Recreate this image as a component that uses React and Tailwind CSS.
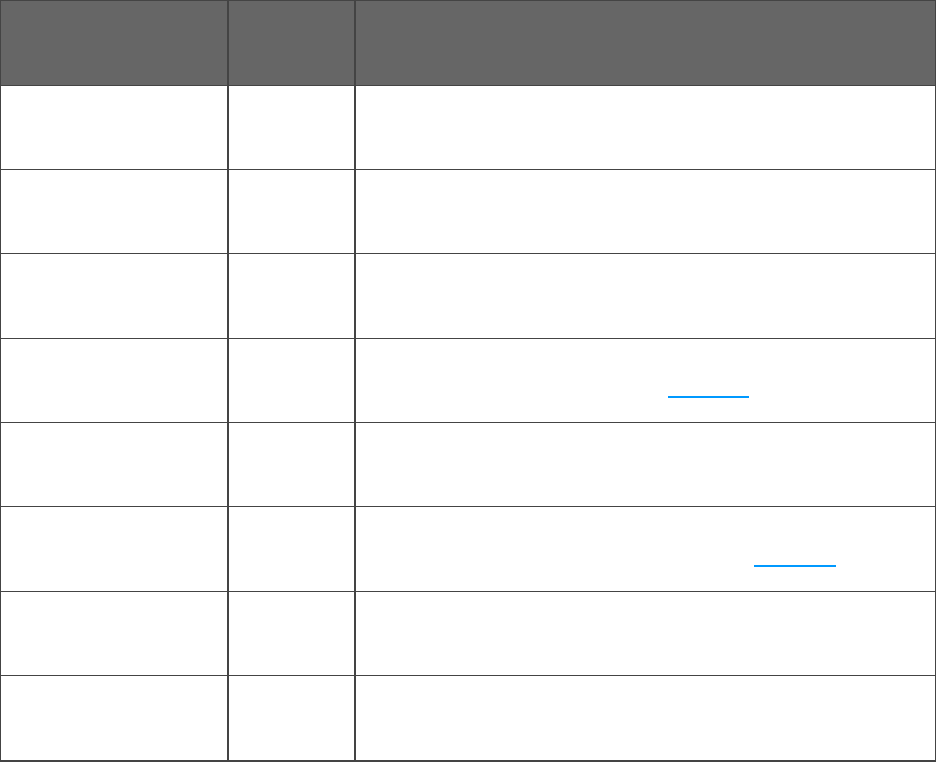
const rows = [
  { h: "h-[84px]" },
  { h: "h-[84px]" },
  { h: "h-[85px]" },
  { h: "h-[84px]", link: { pl: "pl-[312px]", pt: "pt-[57px]", w: "w-[81px]" } },
  { h: "h-[84px]" },
  { h: "h-[85px]", link: { pl: "pl-[398px]", pt: "pt-[58px]", w: "w-[82px]" } },
  { h: "h-[84px]" },
  { h: "h-[84px]", last: true },
];

const Row = ({ h, link, last }) => (
  <div className={`flex ${h} ${last ? "" : "border-b border-[#444]"}`}>
    <div className="w-[228px] border-r-2 border-[#444]" />
    <div className="w-[127px] border-r-2 border-[#444]" />
    <div className={`flex-1 ${link ? `${link.pl} ${link.pt}` : ""}`}>
      {link && (
        <a
          href="#"
          className={`block ${link.w} h-[2px] bg-[#0099ff]`}
        />
      )}
    </div>
  </div>
);

const App = () => {
  return (
    <div
      className="w-[936px] h-[762px] bg-white"
      style={{ fontFamily: "'Open Sans', 'Liberation Sans', sans-serif" }}
    >
      <div className="flex flex-col border-t border-l border-r border-b-2 border-[#444]">
        <div className="flex h-[85px] bg-[#666] border-b border-[#444] text-white font-bold">
          <div className="w-[228px] border-r-2 border-[#444]" />
          <div className="w-[127px] border-r-2 border-[#444]" />
          <div className="flex-1" />
        </div>
        {rows.map((r, i) => (
          <Row key={i} {...r} />
        ))}
      </div>
    </div>
  );
};

export default App;
